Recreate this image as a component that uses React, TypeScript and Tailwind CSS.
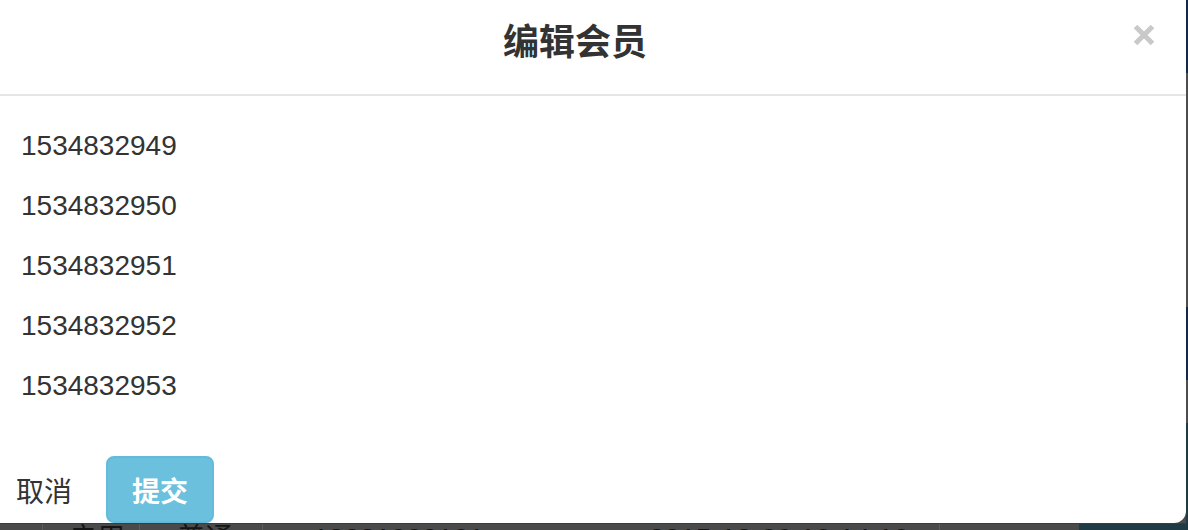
import React from "react";

const sans = { fontFamily: '"Liberation Sans", "Noto Sans CJK SC", Arial, sans-serif' };

export default function App() {
  const ids = ["1534832949", "1534832950", "1534832951", "1534832952", "1534832953"];
  return (
    <div className="relative w-[1188px] h-[530px] overflow-hidden bg-[#4a4a4a]" style={sans}>
      {/* dimmed page behind the modal */}
      <div className="flex h-full">
        <div className="flex-1 flex flex-col">
          <div className="h-[523px]" />
          <div className="flex h-[7px] overflow-hidden border-t border-[#3c3c3c] text-[28px] leading-[40px] text-[#151515]">
            <div className="w-[43px] border-r border-[#5c5c5c]" />
            <div className="w-[97px] border-r border-[#5c5c5c] pl-[26px] -mt-[5px]">启用</div>
            <div className="w-[123px] border-r border-[#5c5c5c] pl-[37px] -mt-[5px]">普通</div>
            <div className="w-[677px] border-r border-[#5c5c5c] pl-[50px] -mt-[5px] flex">
              <span className="w-[336px]">13081908101</span>
              <span>2015-12-09 10:14:10</span>
            </div>
            <div className="w-[139px]" />
            <div className="flex-1 bg-[#1e3b46]" />
          </div>
        </div>
        <div className="w-[2px] flex flex-col">
          <div className="h-[73px] bg-[#13294a]" />
          <div className="h-[234px] bg-[#4d4d4d]" />
          <div className="h-[73px] bg-[#13294a]" />
          <div className="h-[43px] bg-[#4d4d4d]" />
          <div className="flex-1 bg-[#1e3b46]" />
        </div>
      </div>

      {/* modal */}
      <div className="absolute left-0 top-0 w-[1186px] h-[523px] bg-white rounded-br-[12px] flex flex-col text-[#333333]">
        <div className="flex items-start pl-[17px] pr-[31px] pt-[19px] h-[96px] border-b-2 border-[#e5e5e5]">
          <div
            className="flex-1 text-center text-[36px] leading-[40px] font-bold text-[#333333]"
            style={{ fontFamily: '"Noto Sans CJK SC", "Liberation Sans", sans-serif' }}
          >
            编辑会员
          </div>
          <svg width="22" height="22" viewBox="0 0 22 22" className="mt-[5px]">
            <path d="M2.5 2.5 L19.5 19.5 M19.5 2.5 L2.5 19.5" stroke="#c9c9c9" strokeWidth="5" />
          </svg>
        </div>
        <div className="pl-[21px] pt-[30px] text-[28px] leading-[40px]">
          {ids.map((id) => (
            <p key={id} className="mb-[20px]">{id}</p>
          ))}
        </div>
        <div className="flex items-center pl-[16px] pt-[30px] gap-[34px]">
          <span
            className="text-[28px] leading-[40px] text-[#333333]"
            style={{ fontFamily: '"Noto Sans CJK SC", "Liberation Sans", sans-serif' }}
          >
            取消
          </span>
          <button
            className="w-[108px] h-[67px] rounded-[8px] bg-[#6bc0dd] border-2 border-[#62bbda] text-white text-[28px] font-bold flex items-center justify-center"
            style={{ fontFamily: '"Noto Sans CJK SC", "Liberation Sans", sans-serif' }}
          >
            提交
          </button>
        </div>
      </div>
    </div>
  );
}
